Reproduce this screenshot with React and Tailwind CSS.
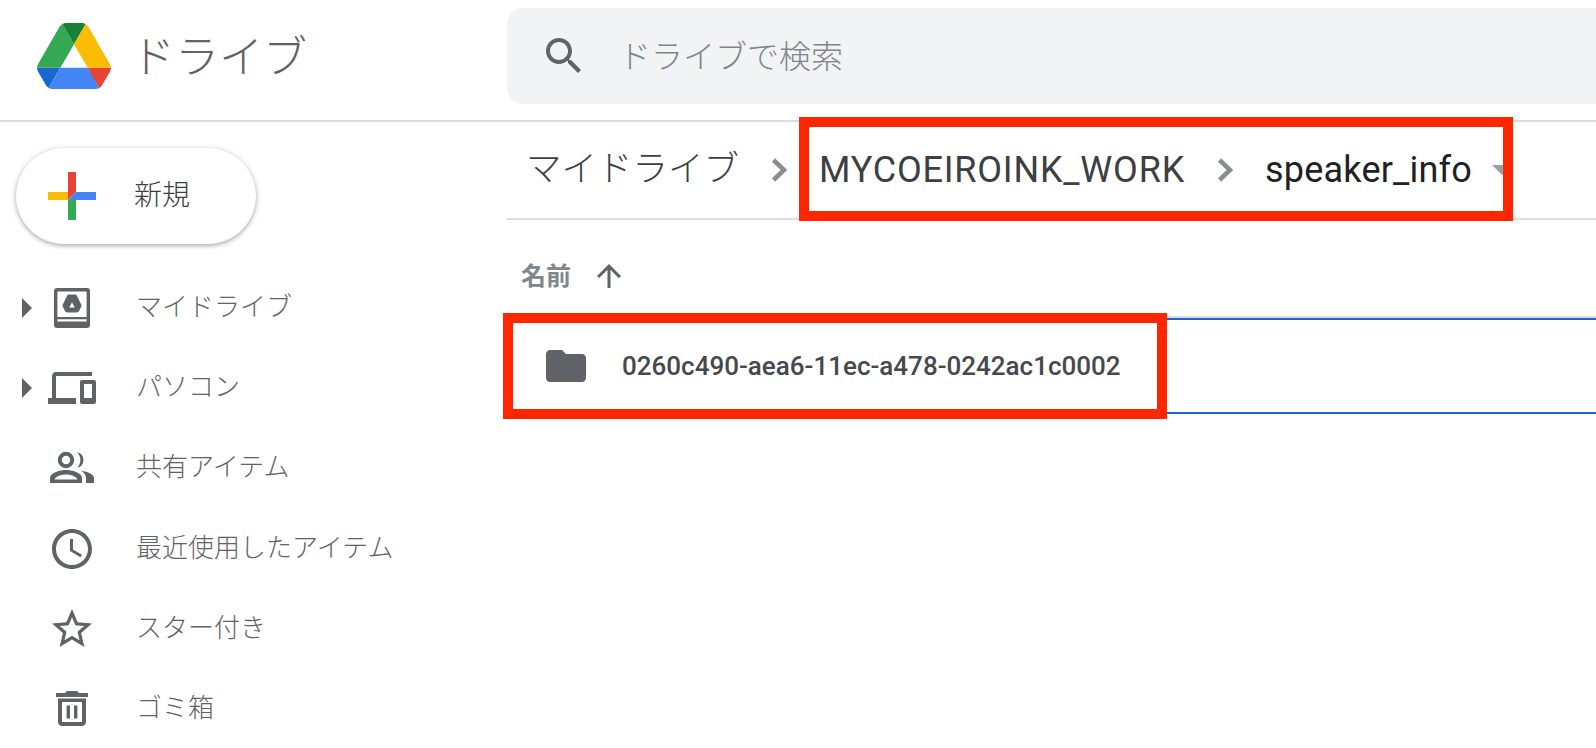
import React from "react";

const G = "#5f6368";

function Ico({ d, className = "w-12 h-12", fill = G, rule }) {
  return (
    <svg viewBox="0 0 24 24" className={className} fill={fill}>
      <path d={d} fillRule={rule} />
    </svg>
  );
}

const DRIVE = "M4.5 2H19.5C20.6 2 21 2.6 21 3.5V20.5C21 21.4 20.4 22 19.5 22H4.5C3.6 22 3 21.4 3 20.5V3.5C3 2.6 3.6 2 4.5 2ZM4.7 3.7V16.5H19.3V3.7ZM4.7 17.6V18.7H19.3V17.6ZM10.6 5.2H13.4C13.9 5.2 14.2 5.4 14.4 5.8L16.6 10.2C16.8 10.6 16.8 11 16.6 11.3L15.6 13.4C15.4 13.8 15 14.2 14.4 14.2H9.6C9 14.2 8.6 13.8 8.4 13.4L7.4 11.3C7.2 11 7.2 10.6 7.4 10.2L9.6 5.8C9.8 5.4 10.1 5.2 10.6 5.2ZM12 9.3 10.6 11.8H13.4Z";
const DEVICES = "M4 6h18V4H4c-1.1 0-2 .9-2 2v11H0v3h14v-3H4V6zm19 2h-6c-.55 0-1 .45-1 1v10c0 .55.45 1 1 1h6c.55 0 1-.45 1-1V9c0-.55-.45-1-1-1zm-1 9h-4v-7h4v7z";
const PEOPLE = "M9 3.9a4.1 4.1 0 1 1 0 8.2 4.1 4.1 0 0 1 0-8.2zM9 5.9a2.1 2.1 0 1 0 0 4.2 2.1 2.1 0 0 0 0-4.2zM14.6 4.1a4 4 0 0 1 0 7.8c1-1 1.6-2.4 1.6-3.9s-.6-2.9-1.6-3.9zM9 13c-2.7 0-8 1.3-8 4v2.5h16V17c0-2.7-5.3-4-8-4zM9 15.2c-2.3 0-5.1.9-5.7 2.5h11.4c-.6-1.6-3.4-2.5-5.7-2.5zM16.3 13.2c2.6.4 6.7 1.6 6.7 3.8v2.5h-4V17c0-1.6-1-2.9-2.7-3.8z";
const CLOCK = "M11.99 2C6.47 2 2 6.48 2 12s4.47 10 9.99 10C17.52 22 22 17.52 22 12S17.52 2 11.99 2zM12 20c-4.42 0-8-3.58-8-8s3.58-8 8-8 8 3.58 8 8-3.58 8-8 8zm.5-13H11v6l5.25 3.15.75-1.23-4.5-2.67z";
const STAR = "M22 9.24l-7.19-.62L12 2 9.19 8.63 2 9.24l5.46 4.73L5.82 21 12 17.27 18.18 21l-1.63-7.03L22 9.24zM12 15.4l-3.76 2.27 1-4.28-3.32-2.88 4.38-.38L12 6.1l1.71 4.04 4.38.38-3.32 2.88 1 4.28L12 15.4z";
const TRASH = "M4 4h4.5l1-1h5l1 1H20v2H4zM5 6.8V18.5C5 19.6 5.9 20.5 7 20.5h10c1.1 0 2-.9 2-2V6.8zM7 8.5h10v10H7zM9.3 10.2h1.7v6.6H9.3zM13 10.2h1.7v6.6H13z";
const SEARCH = "M15.5 14h-.79l-.28-.27C15.41 12.59 16 11.11 16 9.5 16 5.91 13.09 3 9.5 3S3 5.91 3 9.5 5.91 16 9.5 16c1.61 0 3.09-.59 4.23-1.57l.27.28v.79l5 4.99L20.49 19l-4.99-5zm-6 0C7.01 14 5 11.99 5 9.5S7.01 5 9.5 5 14 7.01 14 9.5 11.99 14 9.5 14z";
const FOLDER = "M10 4H4c-1.1 0-2 .9-2 2v12c0 1.1.9 2 2 2h16c1.1 0 2-.9 2-2V8c0-1.1-.9-2-2-2h-8l-2-2z";
const UP = "M4 12l1.41 1.41L11 7.83V20h2V7.83l5.58 5.59L20 12l-8-8-8 8z";

const items = [
  { label: "マイドライブ", d: DRIVE, caret: true, rule: "evenodd" },
  { label: "パソコン", d: DEVICES, caret: true },
  { label: "共有アイテム", d: PEOPLE, rule: "evenodd" },
  { label: "最近使用したアイテム", d: CLOCK },
  { label: "スター付き", d: STAR },
  { label: "ゴミ箱", d: TRASH, rule: "evenodd" },
];

function Chevron({ className }) {
  return (
    <svg viewBox="0 0 16 24" className={className} fill="none" stroke="#8a8d90" strokeWidth="4.5">
      <path d="M2.5 2 L13 12 L2.5 22" />
    </svg>
  );
}

export default function App() {
  return (
    <div className="relative w-[1596px] h-[748px] overflow-hidden bg-white font-['Roboto','Noto_Sans_CJK_JP',sans-serif]">
      <header className="flex h-[122px] border-b-2 border-[#dadce0]">
        <div className="flex w-[507px] shrink-0 items-center pl-[37px] pb-[8px]">
          <svg viewBox="0 0 87.3 78" className="w-[74px] h-[66px] shrink-0">
            <path d="m6.6 66.85 3.85 6.65c.8 1.4 1.95 2.5 3.3 3.3l13.75-23.8h-27.5c0 1.55.4 3.1 1.2 4.5z" fill="#1967d2" />
            <path d="m43.65 25-13.75-23.8c-1.35.8-2.5 1.9-3.3 3.3l-25.4 44a9.06 9.06 0 0 0 -1.2 4.5h27.5z" fill="#34a853" />
            <path d="m73.55 76.8c1.35-.8 2.5-1.9 3.3-3.3l1.6-2.75 7.65-13.25c.8-1.4 1.2-2.95 1.2-4.5h-27.502l5.852 11.5z" fill="#ea4335" />
            <path d="m43.65 25 13.75-23.8c-1.35-.8-2.9-1.2-4.5-1.2h-18.5c-1.6 0-3.15.45-4.5 1.2z" fill="#188038" />
            <path d="m59.8 53h-32.3l-13.75 23.8c1.35.8 2.9 1.2 4.5 1.2h50.8c1.6 0 3.15-.45 4.5-1.2z" fill="#4285f4" />
            <path d="m73.4 26.5-12.7-22c-.8-1.4-1.95-2.5-3.3-3.3l-13.75 23.8 16.15 28h27.45c0-1.55-.4-3.1-1.2-4.5z" fill="#fbbc04" />
          </svg>
          <span className="ml-[20px] pt-[4px] text-[44px] leading-none font-light text-[#5f6368]">ドライブ</span>
        </div>
        <div className="flex-1 flex items-center h-[96px] mt-[8px] bg-[#f1f3f4] rounded-l-[16px] pl-[33px]">
          <Ico d={SEARCH} />
          <span className="ml-[31px] pt-[2px] text-[32px] leading-none font-light text-[#80868b]">ドライブで検索</span>
        </div>
      </header>

      <div className="flex">
        <aside className="w-[507px] shrink-0">
          <button className="mt-[26px] ml-[16px] flex items-center w-[240px] h-[96px] rounded-full bg-white shadow-[0_2px_4px_rgba(60,64,67,0.35),0_0_6px_rgba(60,64,67,0.15)]">
            <svg viewBox="0 0 48 48" className="ml-[32px] w-12 h-12">
              <polygon points="20,0 28,0 28,20 20,28" fill="#ea4335" />
              <polygon points="0,20 20,20 20,28 0,28" fill="#fbbc04" />
              <polygon points="28,20 48,20 48,28 20,28" fill="#4285f4" />
              <polygon points="20,28 28,28 28,48 20,48" fill="#34a853" />
            </svg>
            <span className="ml-[38px] text-[28px] leading-none font-light text-[#3c4043]">新規</span>
          </button>
          <nav className="mt-[24px] flex flex-col">
            {items.map((it) => (
              <div key={it.label} className="flex items-center h-[80.2px]">
                <div className="w-[48px] pl-[22px] shrink-0">
                  {it.caret && (
                    <svg viewBox="0 0 10 20" className="w-[10px] h-[20px]" fill={G}>
                      <polygon points="0,0 10,10 0,20" />
                    </svg>
                  )}
                </div>
                <Ico d={it.d} rule={it.rule} className="w-12 h-12 shrink-0" />
                <span className="ml-[40px] pb-[2px] text-[26px] leading-none font-light text-[#5f6368]">{it.label}</span>
              </div>
            ))}
          </nav>
        </aside>

        <main className="flex-1">
          <div className="flex items-center h-[98px] border-b-2 border-[#dadce0] pl-[19px]">
            <span className="w-[210px] shrink-0 whitespace-nowrap text-[35.5px] leading-none font-light text-[#3c4043]">マイドライブ</span>
            <Chevron className="ml-[35px] w-[16px] h-[24px]" />
            <span className="ml-[32px] text-[36px] leading-none tracking-[0.8px] text-[#3c4043]">MYCOEIROINK_WORK</span>
            <Chevron className="ml-[32px] w-[16px] h-[24px]" />
            <span className="ml-[32px] text-[36px] leading-none tracking-[0.2px] text-[#202124]">speaker_info</span>
            <svg viewBox="0 0 20 10" className="ml-[20px] w-[20px] h-[10px]" fill="#9aa0a6">
              <polygon points="0,0 20,0 10,10" />
            </svg>
          </div>
          <div className="flex items-center h-[98px] pl-[14px] pt-[16px] border-b-2 border-[#dadce0]">
            <span className="text-[25px] leading-none font-bold text-[#80868b]">名前</span>
            <Ico d={UP} className="ml-[20px] w-9 h-9" />
          </div>
          <div className="flex items-center h-[96px] border-y-2 border-[#1967d2] pl-[35px]">
            <Ico d={FOLDER} />
            <span className="ml-[32px] text-[26px] leading-none font-medium text-[#45494d]">0260c490-aea6-11ec-a478-0242ac1c0002</span>
          </div>
        </main>
      </div>

      <div className="absolute left-[799px] top-[117px] w-[714px] h-[104px] border-[10px] border-[#ff2600]" />
      <div className="absolute left-[503px] top-[313px] w-[664px] h-[106px] border-[10px] border-[#ff2600]" />
    </div>
  );
}
